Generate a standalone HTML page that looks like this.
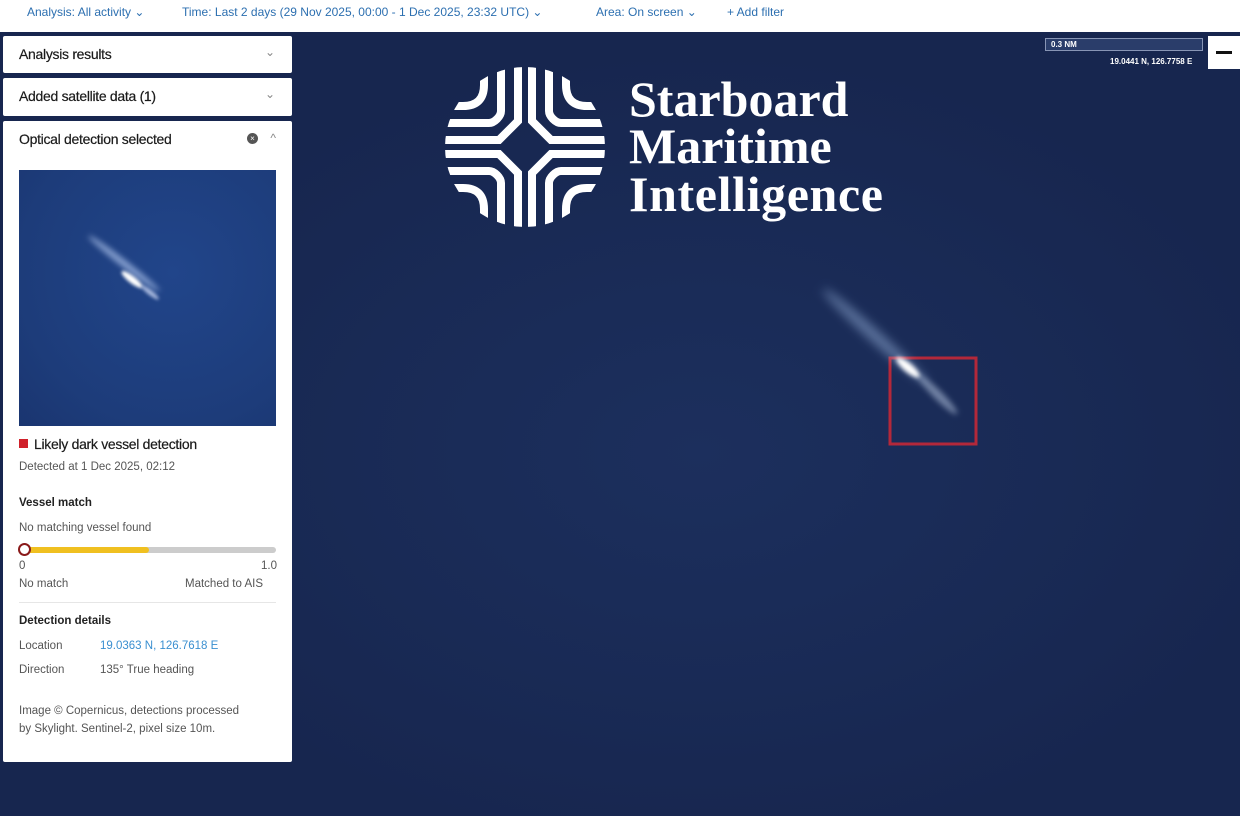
<!DOCTYPE html>
<html><head><meta charset="utf-8"><style>
*{margin:0;padding:0;box-sizing:border-box}
body{width:1240px;height:816px;overflow:hidden;position:relative;font-family:"Liberation Sans",sans-serif;background:#1a2a55}
#map{position:absolute;left:0;top:32px;width:1240px;height:784px;background:radial-gradient(ellipse 600px 400px at 700px 420px,#1c2f5d,#192a55 60%,#17264f)}
#top{position:absolute;left:0;top:0;width:1240px;height:32px;background:#fff;font-size:12px;color:#2c6fb0}
#top span{position:absolute;top:5px;white-space:nowrap}
.p{position:absolute;left:3px;width:289px;background:#fff;border-radius:2px}
.h{position:absolute;left:16px;font-size:14px;color:#1a1a1a;letter-spacing:-.3px;-webkit-text-stroke:.2px #1a1a1a}
.chev{position:absolute;right:17px;color:#888;font-size:12px}
.t{position:absolute;left:16px;font-size:11.5px;color:#555;white-space:nowrap}
.b{color:#222;font-weight:bold}
</style></head><body>
<div id="map"></div>
<div id="top">
<span style="left:27px">Analysis: All activity ⌄</span>
<span style="left:182px">Time: Last 2 days (29 Nov 2025, 00:00 - 1 Dec 2025, 23:32 UTC) ⌄</span>
<span style="left:596px">Area: On screen ⌄</span>
<span style="left:727px">+ Add filter</span>
</div>
<div class="p" style="top:36px;height:37px"><div class="h" style="top:10px">Analysis results</div><div class="chev" style="top:9px">⌄</div></div>
<div class="p" style="top:78px;height:38px"><div class="h" style="top:10px">Added satellite data (1)</div><div class="chev" style="top:9px">⌄</div></div>
<div class="p" style="top:121px;height:641px">
<div class="h" style="top:10px">Optical detection selected</div>
<div style="position:absolute;left:244px;top:12px;width:11px;height:11px;border-radius:50%;background:#555;color:#fff;font-size:8px;text-align:center;line-height:11px">×</div>
<div class="chev" style="top:10px;right:16px">^</div>
<div style="position:absolute;left:16px;top:49px;width:257px;height:256px;background:radial-gradient(ellipse at 60% 40%,#21458a,#1d3c7a 70%,#1a3570);overflow:hidden">
<div style="position:absolute;left:60px;top:90px;width:90px;height:7px;border-radius:50%;background:rgba(200,220,255,.6);filter:blur(3px);transform:rotate(38deg)"></div>
<div style="position:absolute;left:100px;top:106px;width:26px;height:7px;border-radius:50%;background:#fff;filter:blur(1.5px);transform:rotate(38deg)"></div>
<div style="position:absolute;left:120px;top:120px;width:22px;height:5px;border-radius:50%;background:rgba(220,230,255,.7);filter:blur(1.5px);transform:rotate(38deg)"></div>
</div>
<div style="position:absolute;left:16px;top:318px;width:9px;height:9px;background:#d0202a"></div>
<div class="h" style="top:315px;left:31px;font-size:14px">Likely dark vessel detection</div>
<div class="t" style="top:340px">Detected at 1 Dec 2025, 02:12</div>
<div class="t b" style="top:376px">Vessel match</div>
<div class="t" style="top:401px">No matching vessel found</div>
<div style="position:absolute;left:16px;top:426px;width:257px;height:6px;background:#ccc;border-radius:3px"></div>
<div style="position:absolute;left:16px;top:426px;width:130px;height:6px;background:#f0c020;border-radius:3px"></div>
<div style="position:absolute;left:15px;top:422px;width:13px;height:13px;border-radius:50%;border:2px solid #8a1a1a;background:#fff"></div>
<div class="t" style="top:439px">0</div><div class="t" style="top:439px;left:258px">1.0</div>
<div class="t" style="top:457px">No match</div><div class="t" style="top:457px;left:182px">Matched to AIS</div>
<div style="position:absolute;left:16px;top:481px;width:257px;height:1px;background:#e6e6e6"></div>
<div class="t b" style="top:494px">Detection details</div>
<div class="t" style="top:519px">Location</div><div class="t" style="top:519px;left:97px;color:#3a8fd0">19.0363 N, 126.7618 E</div>
<div class="t" style="top:543px">Direction</div><div class="t" style="top:543px;left:97px">135° True heading</div>
<div class="t" style="top:581px;line-height:18px;white-space:normal;width:225px">Image © Copernicus, detections processed by Skylight. Sentinel-2, pixel size 10m.</div>
</div>
<!-- scale -->
<div style="position:absolute;left:1045px;top:38px;width:158px;height:13px;border:1px solid #8895b5;background:#2a3d6a;color:#fff;font-size:8px;font-weight:bold;padding-left:5px;line-height:11px">0.3 NM</div>
<div style="position:absolute;left:1110px;top:57px;color:#fff;font-size:8px;font-weight:bold">19.0441 N, 126.7758 E</div>
<div style="position:absolute;left:1208px;top:36px;width:32px;height:33px;background:#fff"><div style="position:absolute;left:8px;top:15px;width:16px;height:3px;background:#111"></div></div>
<!-- logo -->
<svg style="position:absolute;left:0;top:0" width="1240" height="816">
<defs>
<clipPath id="c"><circle cx="525" cy="147" r="80"/></clipPath>
<g id="q" fill="none" stroke="#fff" stroke-width="8" stroke-linejoin="round">
<path d="M-7,-95 L-7,-24 Q-7,-19 -12,-14 L-14,-12 Q-19,-7 -24,-7 L-95,-7"/>
<path d="M-24,-95 L-24,-40 Q-24,-30 -32,-30 L-30,-32 Q-30,-24 -40,-24 L-95,-24"/>
<path d="M-41,-95 L-41,-66 Q-41,-41 -66,-41 L-95,-41"/>
<path d="M-58,-90 Q-58,-58 -90,-58"/>
<path d="M-22,-95 L-22,-42" stroke-width="0"/>
</g>
<g id="q2" fill="none" stroke="#fff" stroke-width="8">
<path d="M-7,-95 L-7,-26 L-26,-7 L-95,-7"/>
<path d="M-24,-95 L-24,-36 Q-24,-32 -28,-28 Q-32,-24 -36,-24 L-95,-24"/>
<path d="M-41,-95 L-41,-62 Q-41,-41 -62,-41 L-95,-41"/>
<path d="M-58,-95 C-58,-72 -66,-60 -95,-58"/>
</g>
</defs>
<g clip-path="url(#c)">
<g transform="translate(525,147)">
<use href="#q2"/>
<use href="#q2" transform="scale(-1,1)"/>
<use href="#q2" transform="scale(1,-1)"/>
<use href="#q2" transform="scale(-1,-1)"/>
</g>
</g>
<g font-family="Liberation Serif,serif" font-weight="bold" font-size="50" fill="#fff">
<text x="629" y="116">Starboard</text>
<text x="629" y="163">Maritime</text>
<text x="629" y="211" textLength="254">Intelligence</text>
</g>
<rect x="890" y="358" width="86" height="86" fill="none" stroke="#b3283a" stroke-width="3"/>
</svg>
<div style="position:absolute;left:805px;top:330px;width:140px;height:12px;border-radius:50%;background:rgba(170,200,240,.45);filter:blur(5px);transform:rotate(42deg)"></div>
<div style="position:absolute;left:893px;top:363px;width:30px;height:9px;border-radius:50%;background:#fff;filter:blur(2px);transform:rotate(40deg)"></div>
<div style="position:absolute;left:910px;top:390px;width:55px;height:9px;border-radius:50%;background:rgba(200,215,240,.5);filter:blur(3px);transform:rotate(45deg)"></div>
</body></html>
